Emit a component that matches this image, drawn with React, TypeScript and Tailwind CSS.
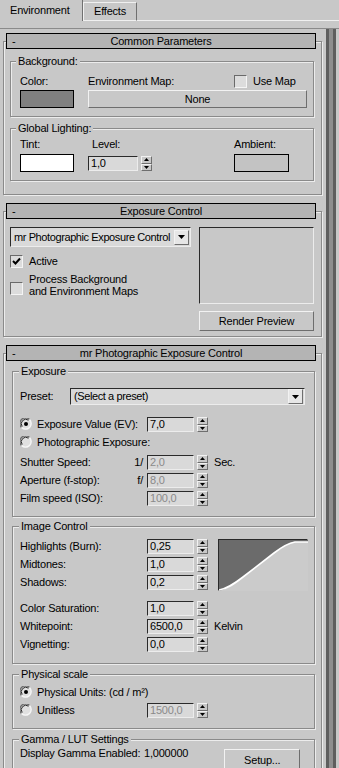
import React from 'react';

const sunken = 'border-t border-l border-t-[#2a2a2a] border-l-[#2a2a2a] border-b border-r border-b-[#ececec] border-r-[#ececec]';
const raised = 'border-t border-l border-t-[#f2f2f2] border-l-[#f2f2f2] border-b border-r border-b-[#6e6e6e] border-r-[#6e6e6e]';

const Header: React.FC<{ title: string }> = ({ title }) => (
    <div className="relative z-10 ml-[3px] mr-[6px] h-[16px] border border-black bg-[#b4b4b4] grid grid-cols-[20px_1fr_20px] items-center">
        <span className="pl-[5px] leading-[12px]">-</span>
        <span className="text-center leading-[12px]">{title}</span>
        <span />
    </div>
);

const Rollout: React.FC<{ title: string; className?: string; bodyClass?: string; children: React.ReactNode }> = ({ title, className, bodyClass, children }) => (
    <div className={`ml-[3px] mr-[4px] ${className ?? ''}`}>
        <Header title={title} />
        <div className={`-mt-[8px] border border-[#8a8a8a] shadow-[inset_1px_1px_0_#ececec,1px_1px_0_#ececec] ${bodyClass ?? ''}`}>
            {children}
        </div>
    </div>
);

const Group: React.FC<{ label: string; className?: string; legendClass?: string; children: React.ReactNode }> = ({ label, className, legendClass, children }) => (
    <fieldset className={`border border-[#8a8a8a] shadow-[inset_1px_1px_0_#ececec,1px_1px_0_#ececec] ${className ?? ''}`}>
        <legend className={`px-[2px] leading-[13px] bg-[#c8c8c8] ${legendClass ?? 'ml-[5px]'}`}>{label}</legend>
        {children}
    </fieldset>
);

const Spinner = () => (
    <div className="ml-[3px] flex h-[15px] w-[11px] flex-col">
        <div className={`flex h-[8px] items-center justify-center bg-[#c8c8c8] ${raised}`}>
            <svg width="5" height="3" viewBox="0 0 5 3"><path d="M0 3 L2.5 0 L5 3Z" fill="#000" /></svg>
        </div>
        <div className={`flex h-[7px] items-center justify-center bg-[#c8c8c8] ${raised}`}>
            <svg width="5" height="3" viewBox="0 0 5 3"><path d="M0 0 L2.5 3 L5 0Z" fill="#000" /></svg>
        </div>
    </div>
);

const Field: React.FC<{ value: string; disabled?: boolean; w?: string }> = ({ value, disabled, w }) => (
    <div className={`${w ?? 'w-[47px]'} h-[15px] bg-[#d9d9d9] ${sunken} pl-[2px] leading-[13px] ${disabled ? 'text-[#8a8a8a]' : 'text-black'}`}>
        {value}
    </div>
);

const Check: React.FC<{ checked?: boolean }> = ({ checked }) => (
    <div className="flex h-[13px] w-[13px] shrink-0 items-center justify-center border-t border-l border-t-[#6a6a6a] border-l-[#6a6a6a] border-b border-r border-b-[#f4f4f4] border-r-[#f4f4f4] bg-[#dcdcdc]">
        {checked && (
            <svg width="9" height="9" viewBox="0 0 9 9"><path d="M1 4 L3.5 6.5 L8 1.5" stroke="#000" strokeWidth="2" fill="none" /></svg>
        )}
    </div>
);

const Radio: React.FC<{ checked?: boolean }> = ({ checked }) => (
    <svg width="12" height="12" viewBox="0 0 12 12" className="shrink-0">
        <circle cx="6" cy="6" r="5.5" fill="#e0e0e0" />
        <path d="M1.5 9.5 A5.5 5.5 0 0 1 9.5 1.5" stroke="#6a6a6a" strokeWidth="1.3" fill="none" />
        <path d="M2.2 8.5 A4.5 4.5 0 0 1 8.5 2.2" stroke="#2a2a2a" strokeWidth="1" fill="none" />
        <path d="M9.5 1.5 A5.5 5.5 0 0 1 1.5 9.5" stroke="#f6f6f6" strokeWidth="1.3" fill="none" />
        {checked && <circle cx="6" cy="6" r="2" fill="#000" />}
    </svg>
);

const ParamRow: React.FC<{ label: string; prefix?: string; value: string; disabled?: boolean; suffix?: string; className?: string }> = ({ label, prefix, value, disabled, suffix, className }) => (
    <div className={`flex h-[18px] items-center ${className ?? ''}`}>
        <span className="w-[110px] whitespace-nowrap">{label}</span>
        <span className="w-[17px] pr-[4px] text-right">{prefix}</span>
        <Field value={value} disabled={disabled} />
        <Spinner />
        {suffix && <span className="ml-[6px]">{suffix}</span>}
    </div>
);

const Dropdown: React.FC<{ text: string; className: string }> = ({ text, className }) => (
    <div className={`flex items-center bg-[#d9d9d9] ${sunken} ${className}`}>
        <span className="flex-1 overflow-hidden whitespace-nowrap pl-[3px] tracking-[-0.4px]">{text}</span>
        <div className={`mr-[1px] flex h-[15px] w-[15px] shrink-0 items-center justify-center bg-[#e6e6e6] ${raised}`}>
            <svg width="7" height="4" viewBox="0 0 7 4"><path d="M0 0 L3.5 4 L7 0Z" fill="#000" /></svg>
        </div>
    </div>
);

export default function App() {
    return (
        <div className="flex h-[768px] w-[339px] flex-col overflow-hidden bg-[#c8c8c8] font-['Liberation_Sans',Arial,sans-serif] text-[11px] leading-[13px] tracking-[-0.2px] text-black">
            {/* tabs */}
            <div className="flex h-[21px] shrink-0 items-end">
                <div className="flex h-[21px] w-[83px] items-center border-r border-r-[#707070] pl-[10px]">Environment</div>
                <div className="flex h-[19px] w-[54px] items-center border-t border-t-[#f0f0f0] border-l border-l-[#f0f0f0] border-r border-r-[#707070] border-b border-b-[#f0f0f0] pl-[10px]">Effects</div>
                <div className="h-[21px] flex-1 border-b border-b-[#f0f0f0]" />
            </div>

            <div className="mt-[7px] flex min-h-0 flex-1 border-t border-t-[#8a8a8a]">
                <div className="w-[326px] shrink-0 pt-[4px]">
                    <Rollout title="Common Parameters" bodyClass="pb-[13px]">
                        <Group label="Background:" className="ml-[6px] mr-[7px] mt-[13px] pb-[8px]">
                            <div className="flex pl-[9px] pt-[7px]">
                                <div className="w-[68px]">
                                    <div className="h-[13px]">Color:</div>
                                    <div className="mt-[2px] h-[18px] w-[54px] border border-black bg-[#808080]" />
                                </div>
                                <div className="w-[219px]">
                                    <div className="flex h-[13px] items-center">
                                        <span className="w-[146px]">Environment Map:</span>
                                        <Check />
                                        <span className="ml-[6px]">Use Map</span>
                                    </div>
                                    <div className={`mt-[2px] flex h-[18px] items-center justify-center bg-[#c8c8c8] ${raised}`}>None</div>
                                </div>
                            </div>
                        </Group>
                        <Group label="Global Lighting:" className="ml-[6px] mr-[7px] mt-[5px] pb-[8px]">
                            <div className="flex pl-[9px] pt-[3px]">
                                <div className="w-[68px]">
                                    <div className="h-[13px]">Tint:</div>
                                    <div className="mt-[3px] h-[18px] w-[54px] border border-black bg-white" />
                                </div>
                                <div className="w-[146px]">
                                    <div className="h-[13px] pl-[4px]">Level:</div>
                                    <div className="mt-[3px] flex h-[18px] items-center">
                                        <Field value="1,0" w="w-[50px]" />
                                        <Spinner />
                                    </div>
                                </div>
                                <div>
                                    <div className="h-[13px]">Ambient:</div>
                                    <div className="mt-[3px] h-[18px] w-[55px] border border-black bg-[#c3c3c3]" />
                                </div>
                            </div>
                        </Group>
                    </Rollout>

                    <Rollout title="Exposure Control" className="mt-[8px]" bodyClass="pb-[5px]">
                        <div className="flex pl-[6px] pt-[15px]">
                            <div className="w-[181px]">
                                <Dropdown text="mr Photographic Exposure Control" className="h-[20px]" />
                                <div className="mt-[8px] flex h-[13px] items-center gap-[6px]">
                                    <Check checked />
                                    <span>Active</span>
                                </div>
                                <div className="mt-[5px] flex gap-[6px]">
                                    <div className="mt-[9px]"><Check /></div>
                                    <div className="leading-[12px]">Process Background<br />and Environment Maps</div>
                                </div>
                            </div>
                            <div className="ml-[8px] w-[115px]">
                                <div className="h-[77px] border-t border-l border-t-[#2a2a2a] border-l-[#2a2a2a] border-b border-r border-b-[#ececec] border-r-[#ececec]" />
                                <div className={`mt-[7px] flex h-[20px] items-center justify-center ${raised}`}>Render Preview</div>
                            </div>
                        </div>
                    </Rollout>

                    <Rollout title="mr Photographic Exposure Control" className="mt-[8px]">
                        <Group label="Exposure" legendClass="ml-[6px]" className="ml-[8px] mr-[6px] mt-[11px] pb-[9px]">
                            <div className="pl-[7px] pt-[10px]">
                                <div className="flex h-[17px] items-center">
                                    <span className="w-[50px]">Preset:</span>
                                    <Dropdown text="(Select a preset)" className="h-[17px] w-[235px]" />
                                </div>
                                <div className="mt-[10px] flex h-[18px] items-center">
                                    <Radio checked />
                                    <span className="ml-[5px] w-[110px]">Exposure Value (EV):</span>
                                    <Field value="7,0" />
                                    <Spinner />
                                </div>
                                <div className="flex h-[18px] items-center">
                                    <Radio />
                                    <span className="ml-[5px]">Photographic Exposure:</span>
                                </div>
                                <ParamRow className="mt-[2px]" label="Shutter Speed:" prefix="1/" value="2,0" disabled suffix="Sec." />
                                <ParamRow label="Aperture (f-stop):" prefix="f/" value="8,0" disabled />
                                <ParamRow label="Film speed (ISO):" value="100,0" disabled />
                            </div>
                        </Group>

                        <Group label="Image Control" legendClass="ml-[6px]" className="ml-[8px] mr-[6px] mt-[3px] pb-[10px]">
                            <div className="pl-[7px] pt-[4px]">
                                <div className="flex">
                                    <div>
                                        <ParamRow label="Highlights (Burn):" value="0,25" />
                                        <ParamRow label="Midtones:" value="1,0" />
                                        <ParamRow label="Shadows:" value="0,2" />
                                    </div>
                                    <div className="ml-[10px] mt-[2px] h-[52px] w-[90px] border-t border-l border-t-[#2a2a2a] border-l-[#2a2a2a] border-b border-r border-b-[#ececec] border-r-[#ececec]">
                                        <svg width="89" height="51" viewBox="0 0 89 51" className="block">
                                            <rect width="89" height="51" fill="#cbcbcb" />
                                            <path d="M0 51 L0 0 L89 0 L89 2 L76 2 C70 3 64 6 55 13 L24 37 C15 44 8 49 0 51Z" fill="#6b6b6b" />
                                            <path d="M0 50 C8 49 15 44 24 37 L55 13 C64 6 70 3 76 2 L89 2" stroke="#fff" strokeWidth="1.6" fill="none" />
                                        </svg>
                                    </div>
                                </div>
                                <ParamRow className="mt-[8px]" label="Color Saturation:" value="1,0" />
                                <ParamRow label="Whitepoint:" value="6500,0" suffix="Kelvin" />
                                <ParamRow label="Vignetting:" value="0,0" />
                            </div>
                        </Group>

                        <Group label="Physical scale" legendClass="ml-[6px]" className="ml-[8px] mr-[6px] mt-[4px] pb-[9px]">
                            <div className="pl-[7px] pt-[2px]">
                                <div className="flex h-[18px] items-center">
                                    <Radio checked />
                                    <span className="ml-[5px]">Physical Units: (cd / m²)</span>
                                </div>
                                <div className="flex h-[18px] items-center">
                                    <Radio />
                                    <span className="ml-[5px] w-[110px]">Unitless</span>
                                    <Field value="1500,0" disabled />
                                    <Spinner />
                                </div>
                            </div>
                        </Group>

                        <Group label="Gamma / LUT Settings" legendClass="ml-[6px]" className="ml-[8px] mr-[6px] mt-[4px] pb-[9px]">
                            <div className="flex pl-[7px] pt-[1px]">
                                <span className="w-[124px] whitespace-nowrap">Display Gamma Enabled:</span>
                                <span className="whitespace-nowrap">1,000000</span>
                                <div className={`ml-[36px] mt-[2px] flex h-[22px] w-[76px] shrink-0 items-center justify-center ${raised}`}>Setup...</div>
                            </div>
                        </Group>
                    </Rollout>
                </div>

                {/* scrollbar */}
                <div className="w-[10px] shrink-0 border-l-[3px] border-r-[3px] border-[#5e5e5e] bg-[#8e8e8e]" />
                <div className="w-[3px] shrink-0" />
            </div>
        </div>
    );
}
